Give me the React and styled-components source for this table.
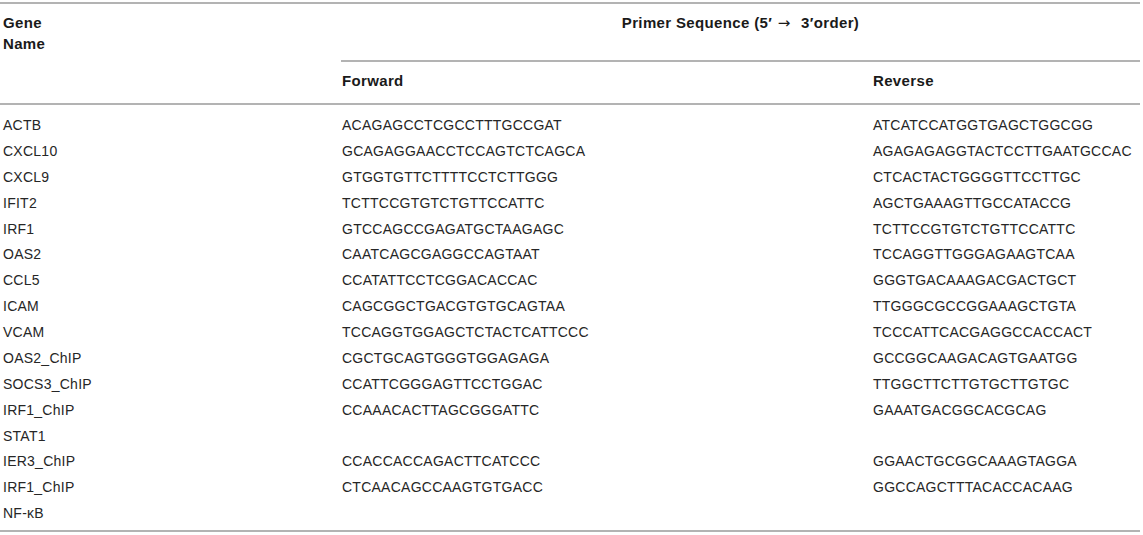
import React from "react";
import styled, { createGlobalStyle } from "styled-components";

const Global = createGlobalStyle`
  html, body { margin: 0; padding: 0; background: #fff; }
  body { padding-top: 2px; font-family: "Liberation Sans", Arial, Helvetica, sans-serif; color: #222; }
`;

const Table = styled.table`
  width: 1140px;
  border-collapse: collapse;
  table-layout: fixed;
  border-top: 2px solid #b3b3b3;
  border-bottom: 2px solid #b3b3b3;
  font-size: 14px;
  letter-spacing: 0.25px;
`;

const Head = styled.thead`
  border-bottom: 2px solid #b3b3b3;
`;

const Th = styled.th`
  font-weight: bold;
  font-size: 15px;
  letter-spacing: 0.35px;
  text-align: ${(p) => (p.$center ? "center" : "left")};
  vertical-align: top;
  line-height: 21px;
  padding: ${(p) => (p.$second ? "7.5px 0 12.5px" : "7.5px 0 0")};
  padding-left: ${(p) => p.$pl || 0}px;
  height: ${(p) => (p.$tall ? "58px" : "auto")};
  box-sizing: border-box;
  border-bottom: ${(p) => (p.$rule ? "2px solid #b3b3b3" : "none")};
  color: #1a1a1a;
`;

const Arrow = styled.span`
  font-family: "DejaVu Sans", sans-serif;
  font-weight: normal;
  font-size: 15px;
  margin: 0 6px 0 1px;
`;

const Td = styled.td`
  vertical-align: top;
  line-height: 25.87px;
  padding: 0;
  padding-left: ${(p) => p.$pl || 0}px;
  white-space: pre-line;
  color: #262626;
`;

const Body = styled.tbody`
  & > tr:first-child > td { padding-top: 8px; }
  & > tr:last-child > td { padding-bottom: 3px; }
`;

const rows = [
  ["ACTB", "ACAGAGCCTCGCCTTTGCCGAT", "ATCATCCATGGTGAGCTGGCGG"],
  ["CXCL10", "GCAGAGGAACCTCCAGTCTCAGCA", "AGAGAGAGGTACTCCTTGAATGCCAC"],
  ["CXCL9", "GTGGTGTTCTTTTCCTCTTGGG", "CTCACTACTGGGGTTCCTTGC"],
  ["IFIT2", "TCTTCCGTGTCTGTTCCATTC", "AGCTGAAAGTTGCCATACCG"],
  ["IRF1", "GTCCAGCCGAGATGCTAAGAGC", "TCTTCCGTGTCTGTTCCATTC"],
  ["OAS2", "CAATCAGCGAGGCCAGTAAT", "TCCAGGTTGGGAGAAGTCAA"],
  ["CCL5", "CCATATTCCTCGGACACCAC", "GGGTGACAAAGACGACTGCT"],
  ["ICAM", "CAGCGGCTGACGTGTGCAGTAA", "TTGGGCGCCGGAAAGCTGTA"],
  ["VCAM", "TCCAGGTGGAGCTCTACTCATTCCC", "TCCCATTCACGAGGCCACCACT"],
  ["OAS2_ChIP", "CGCTGCAGTGGGTGGAGAGA", "GCCGGCAAGACAGTGAATGG"],
  ["SOCS3_ChIP", "CCATTCGGGAGTTCCTGGAC", "TTGGCTTCTTGTGCTTGTGC"],
  ["IRF1_ChIP\nSTAT1", "CCAAACACTTAGCGGGATTC", "GAAATGACGGCACGCAG"],
  ["IER3_ChIP", "CCACCACCAGACTTCATCCC", "GGAACTGCGGCAAAGTAGGA"],
  ["IRF1_ChIP\nNF-κB", "CTCAACAGCCAAGTGTGACC", "GGCCAGCTTTACACCACAAG"],
];

export default function App() {
  return (
    <>
      <Global />
      <Table>
        <colgroup>
          <col style={{ width: 341 }} />
          <col style={{ width: 532 }} />
          <col style={{ width: 267 }} />
        </colgroup>
        <Head>
          <tr>
            <Th rowSpan={2} $pl={3}>
              Gene
              <br />
              Name
            </Th>
            <Th colSpan={2} $center $rule $tall>
              Primer Sequence (5′ <Arrow>→</Arrow> 3′order)
            </Th>
          </tr>
          <tr>
            <Th $second $pl={1}>Forward</Th>
            <Th $second>Reverse</Th>
          </tr>
        </Head>
        <Body>
          {rows.map(([g, f, r], i) => (
            <tr key={i}>
              <Td $pl={3}>{g}</Td>
              <Td $pl={1}>{f}</Td>
              <Td>{r}</Td>
            </tr>
          ))}
        </Body>
      </Table>
    </>
  );
}
